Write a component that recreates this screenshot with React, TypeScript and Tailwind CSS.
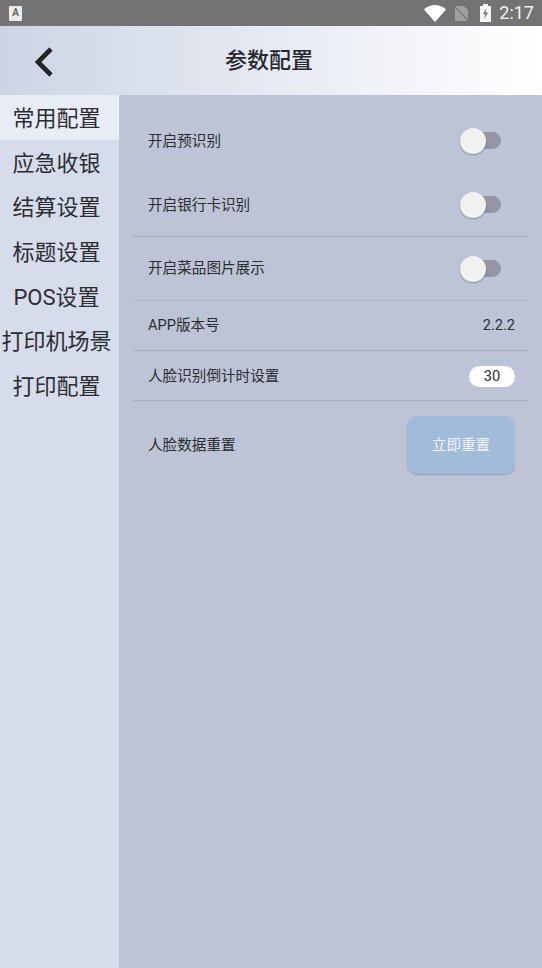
const FONT = "font-['Roboto','Noto_Sans_CJK_SC',sans-serif]";

const MENU = ["常用配置", "应急收银", "结算设置", "标题设置", "POS设置", "打印机场景", "打印配置"];

function Toggle() {
  return (
    <div className="relative mr-[14px] h-[26px] w-[41px]">
      <div className="absolute left-[12px] top-[4px] h-[17px] w-[29px] rounded-full bg-[#9496a8]" />
      <div className="absolute left-0 top-0 h-[26px] w-[26px] rounded-full bg-[#f1f1f1] shadow-[0_1px_2px_rgba(0,0,0,0.3)]" />
    </div>
  );
}

function Row({ label, height, border, children }: {
  label: string;
  height: string;
  border: string;
  children: React.ReactNode;
}) {
  return (
    <div className={`flex items-center justify-between pl-[15px] pr-[14px] ${height} ${border}`}>
      <span className="text-[14.6px] leading-none text-[#2b2d33]">{label}</span>
      {children}
    </div>
  );
}

function StatusBar() {
  return (
    <div className="flex h-[26px] items-center justify-between bg-[#737373] pl-[9px] pr-[8px]">
      <div className="flex h-[15px] w-[13px] items-center justify-center rounded-[1px] bg-[#ececec] text-[10px] font-bold leading-none text-[#666]">
        A
      </div>
      <div className="flex items-center">
        <svg width="22" height="17" viewBox="0 0 22 17" className="mr-[8px]">
          <path d="M0 4.5C3 1.6 7 0 11 0s8 1.6 11 4.5L11 17z" fill="#fff" />
        </svg>
        <svg width="15" height="17" viewBox="0 0 15 17" className="mr-[11px]">
          <path d="M1 1h9l4 4v11H1z" fill="#a0a0a0" />
          <path d="M0 1l15 15.5" stroke="#737373" strokeWidth="1.2" />
        </svg>
        <svg width="11" height="18" viewBox="0 0 11 18" className="mr-[8px]">
          <path d="M3 0h5v2h3v16H0V2h3z" fill="#f5f5f5" />
          <path d="M6.5 4L3 10h2.2L4.2 15 8 8.5H5.6z" fill="#737373" />
        </svg>
        <span className="text-[18px] leading-none text-[#f2f2f2]">2:17</span>
      </div>
    </div>
  );
}

export default function App() {
  return (
    <div className={`flex h-[968px] w-[542px] flex-col overflow-hidden ${FONT}`}>
      <StatusBar />
      <div className="relative flex h-[69px] items-center justify-center bg-gradient-to-r from-[#cdd5e5] to-[#ffffff] pr-[4px]">
        <svg width="20" height="34" viewBox="0 0 20 34" className="absolute left-[33px] top-[19px]">
          <path d="M18 4L5 17l13 13" fill="none" stroke="#22242a" strokeWidth="4.6" strokeLinejoin="miter" />
        </svg>
        <h1 className="text-[22px] font-medium leading-none text-[#26282e]">参数配置</h1>
      </div>
      <div className="flex flex-1">
        <div className="w-[119px] bg-[#d6dcea]">
          {MENU.map((item, i) => (
            <div
              key={item}
              className={`flex h-[44.7px] items-center justify-center whitespace-nowrap pr-[6px] pt-[3px] text-[22px] leading-none text-[#2b2d33] ${i === 0 ? "bg-[#e8ecf4]" : ""}`}
            >
              {item}
            </div>
          ))}
        </div>
        <div className="flex-1 bg-[#bec4d5] pl-[14px] pr-[13px] pt-[15px]">
          <Row label="开启预识别" height="h-[63px]" border="border-b border-[#bbc1d2]">
            <Toggle />
          </Row>
          <Row label="开启银行卡识别" height="h-[64px] pt-[1px]" border="border-b border-[#a8aec1]">
            <Toggle />
          </Row>
          <Row label="开启菜品图片展示" height="h-[64px]" border="border-b border-[#b0b6c8]">
            <Toggle />
          </Row>
          <Row label="APP版本号" height="h-[50px]" border="border-b border-[#a8aec1]">
            <span className="text-[14.6px] leading-none text-[#2b2d33]">2.2.2</span>
          </Row>
          <Row label="人脸识别倒计时设置" height="h-[50px] pt-[1px]" border="border-b border-[#a8aec1]">
            <div className="flex h-[21px] w-[46px] items-center justify-center rounded-full bg-white text-[14.6px] leading-none text-[#2b2d33]">
              30
            </div>
          </Row>
          <div className="flex items-center justify-between pl-[15px] pr-[14px] pt-[15px]">
            <span className="text-[14.6px] leading-none text-[#2b2d33]">人脸数据重置</span>
            <button className="flex h-[58px] w-[108px] items-center justify-center rounded-[10px] bg-[#a1bcda] text-[14.6px] leading-none text-[#f0f4f8] shadow-[0_1px_1px_rgba(90,100,130,0.4)]">
              立即重置
            </button>
          </div>
        </div>
      </div>
    </div>
  );
}
